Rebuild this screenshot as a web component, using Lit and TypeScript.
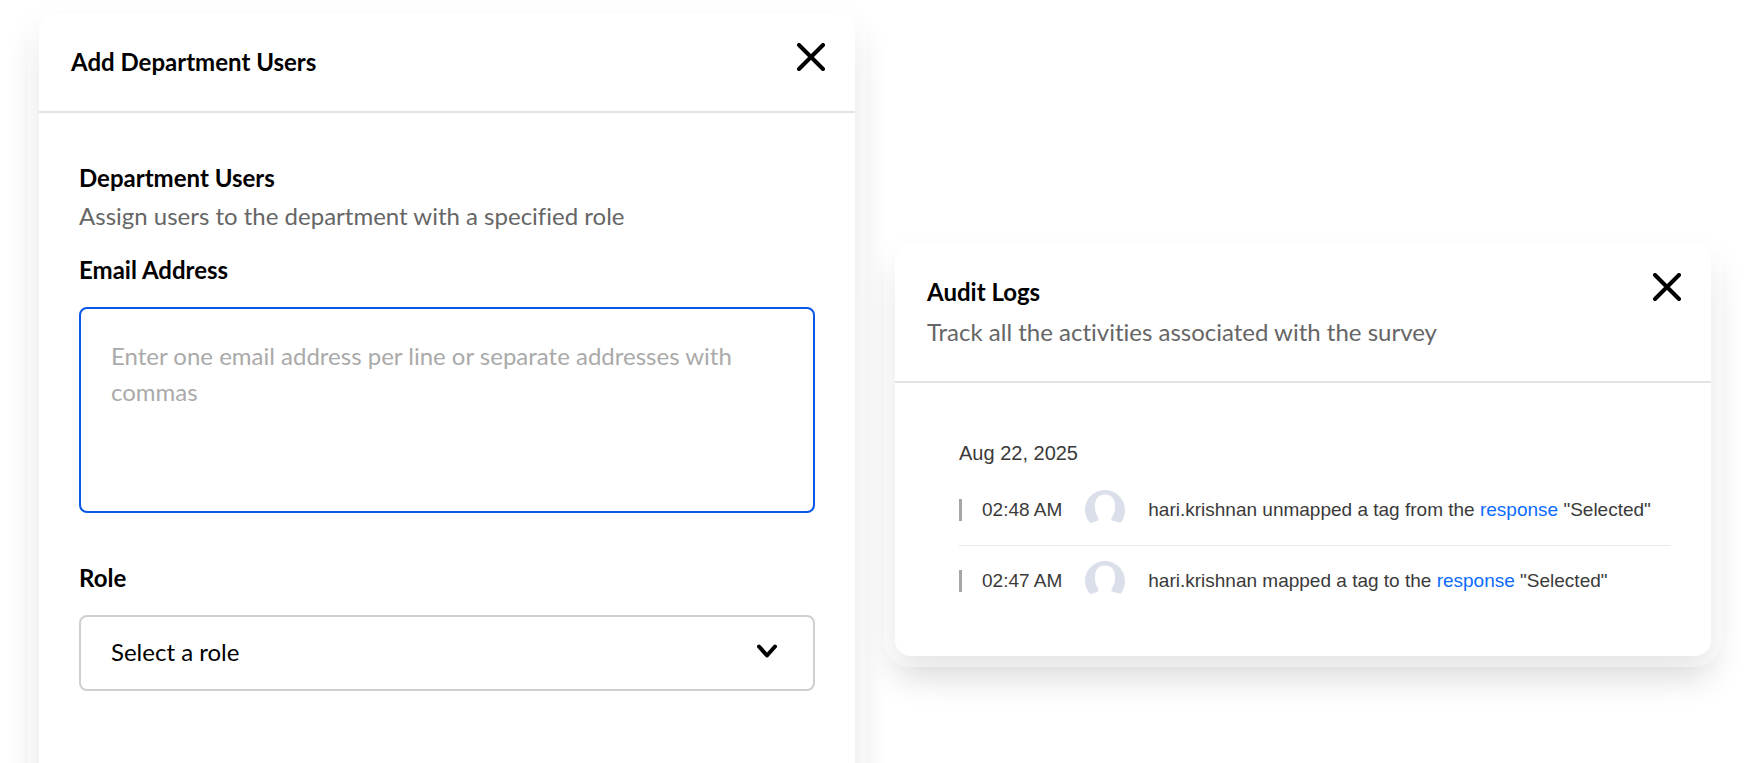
import { LitElement, html, css, svg } from "lit";
import { customElement, state } from "lit/decorators.js";

interface LogEntry {
  time: string;
  user: string;
  action: string;
  target: string;
}

const LOGS: LogEntry[] = [
  { time: "02:48 AM", user: "hari.krishnan", action: "unmapped a tag from the", target: "Selected" },
  { time: "02:47 AM", user: "hari.krishnan", action: "mapped a tag to the", target: "Selected" },
];

const closeGlyph = svg`<path d="M2 2 26 26M26 2 2 26" fill="none" stroke="#000" stroke-width="4" stroke-linecap="round"/>`;

@customElement("side-panel")
class SidePanel extends LitElement {
  static properties = { heading: {}, subheading: {} };
  declare heading: string;
  declare subheading: string;

  static styles = css`
    :host {
      display: block;
      background: #fff;
      border-radius: 16px;
      box-shadow:
        0 0 0 11px rgba(255, 255, 255, 0.4),
        0 20px 34px rgba(0, 0, 0, 0.16);
    }
    .head {
      display: flex;
      justify-content: space-between;
      align-items: flex-start;
      padding: 30px 30px 30px 32px;
      border-bottom: 2px solid #e3e3e3;
    }
    .title {
      margin: 0;
      font-size: 24px;
      line-height: 38px;
      font-weight: 700;
      color: #000;
    }
    .sub {
      margin: 2px 0 0;
      font-size: 24px;
      line-height: 38px;
      color: #666;
    }
    .close {
      display: block;
      padding: 0;
      border: 0;
      background: none;
      cursor: pointer;
    }
    .close svg {
      display: block;
    }
  `;

  render() {
    return html`
      <header class="head">
        <div>
          <h2 class="title">${this.heading}</h2>
          ${this.subheading ? html`<p class="sub">${this.subheading}</p>` : null}
        </div>
        <button class="close" type="button" aria-label="Close">
          <svg width="28" height="28" viewBox="0 0 28 28" aria-hidden="true">${closeGlyph}</svg>
        </button>
      </header>
      <slot></slot>
    `;
  }
}

@customElement("department-form")
class DepartmentForm extends LitElement {
  static styles = css`
    :host {
      display: block;
    }
    .form {
      padding: 46px 40px 160px;
      font-size: 24px;
      line-height: 38px;
    }
    .section {
      margin: 0;
      font-size: 24px;
      font-weight: 700;
      color: #000;
    }
    .hint {
      margin: 0 0 16px;
      color: #666;
    }
    .label {
      display: block;
      margin-bottom: 18px;
      font-weight: 700;
      color: #000;
    }
    .emails {
      display: block;
      box-sizing: border-box;
      width: 100%;
      height: 206px;
      margin-bottom: 46px;
      padding: 29px 30px;
      border: 2px solid #0b57e8;
      border-radius: 8px;
      outline: none;
      resize: none;
      background: #fff;
      font: inherit;
      line-height: 36px;
      color: #000;
    }
    .emails::placeholder {
      color: #aaa;
      opacity: 1;
    }
    .picker {
      display: grid;
      align-items: center;
    }
    .role {
      grid-area: 1 / 1;
      appearance: none;
      width: 100%;
      height: 76px;
      padding: 0 72px 2px 30px;
      border: 2px solid #cfcfcf;
      border-radius: 8px;
      background: #fff;
      font: inherit;
      color: #000;
    }
    .arrow {
      grid-area: 1 / 1;
      justify-self: end;
      margin-right: 38px;
      margin-bottom: 4px;
      pointer-events: none;
    }
  `;

  render() {
    return html`
      <form class="form">
        <h3 class="section">Department Users</h3>
        <p class="hint">Assign users to the department with a specified role</p>
        <label class="label" for="emails">Email Address</label>
        <textarea
          class="emails"
          id="emails"
          placeholder="Enter one email address per line or separate addresses with commas"
        ></textarea>
        <label class="label" for="role">Role</label>
        <div class="picker">
          <select class="role" id="role">
            <option>Select a role</option>
          </select>
          <svg class="arrow" width="20" height="14" viewBox="0 0 20 14" aria-hidden="true">
            <path d="M2 2.500 10 11.500 18 2.500" fill="none" stroke="#000" stroke-width="4" stroke-linecap="round" stroke-linejoin="round" />
          </svg>
        </div>
      </form>
    `;
  }
}

@customElement("audit-log")
class AuditLog extends LitElement {
  @state() private entries = LOGS;

  static styles = css`
    :host {
      display: block;
      font-family: "Liberation Sans", Arial, sans-serif;
      color: #3a3a3a;
    }
    .log {
      padding: 56px 40px 40px 64px;
    }
    .date {
      margin: 0 0 8px;
      font-size: 20px;
      line-height: 28px;
      font-weight: 400;
    }
    .list {
      margin: 0;
      padding: 0;
      list-style: none;
    }
    .row {
      display: flex;
      align-items: center;
      height: 70px;
      font-size: 19px;
      line-height: 22px;
    }
    .row + .row {
      border-top: 1px solid #ebebeb;
    }
    .time {
      padding-left: 20px;
      border-left: 3px solid #a6a6a6;
    }
    .avatar {
      flex: none;
      margin: 0 23px;
    }
    .link {
      color: #0b6cff;
      text-decoration: none;
    }
  `;

  render() {
    return html`
      <section class="log">
        <h3 class="date">Aug 22, 2025</h3>
        <ul class="list">
          ${this.entries.map(
            (e) => html`
              <li class="row">
                <time class="time">${e.time}</time>
                <svg class="avatar" width="40" height="40" viewBox="0 0 40 40" aria-hidden="true">
                  <path
                    fill="#dadfea"
                    d="M5 33C2 29.500 0 25 0 20 0 9 9 0 20 0s20 9 20 20c0 5-1.500 9-4 12.500-4-.3-7.500-1.200-9.500-2.500-.4-1.200.2-2.800 1.500-4.500 1.500-2 2-5 2-9C30 8.500 26.500 4.500 20 4.500S10 8.500 10 16.500c0 4 .7 7 2 9 1.300 1.700 1.700 3.300 1.200 4.800C11.500 31.500 8.500 32.500 5 33Z"
                  />
                </svg>
                <span>${e.user} ${e.action} <a class="link" href="#">response</a> "${e.target}"</span>
              </li>
            `
          )}
        </ul>
      </section>
    `;
  }
}

@customElement("app-root")
class AppRoot extends LitElement {
  static styles = css`
    :host {
      display: block;
      height: 100vh;
      overflow: hidden;
      background: #fff;
      font-family: Lato, "Open Sans", sans-serif;
      font-variant-ligatures: none;
    }
    .page {
      display: grid;
      grid-template-columns: 1fr 1fr;
      align-items: start;
      gap: 40px;
      padding: 13px 38px 0 39px;
    }
    .audit {
      margin-top: 230px;
    }
  `;

  render() {
    return html`
      <main class="page">
        <side-panel heading="Add Department Users">
          <department-form></department-form>
        </side-panel>
        <side-panel class="audit" heading="Audit Logs" subheading="Track all the activities associated with the survey">
          <audit-log></audit-log>
        </side-panel>
      </main>
    `;
  }
}
